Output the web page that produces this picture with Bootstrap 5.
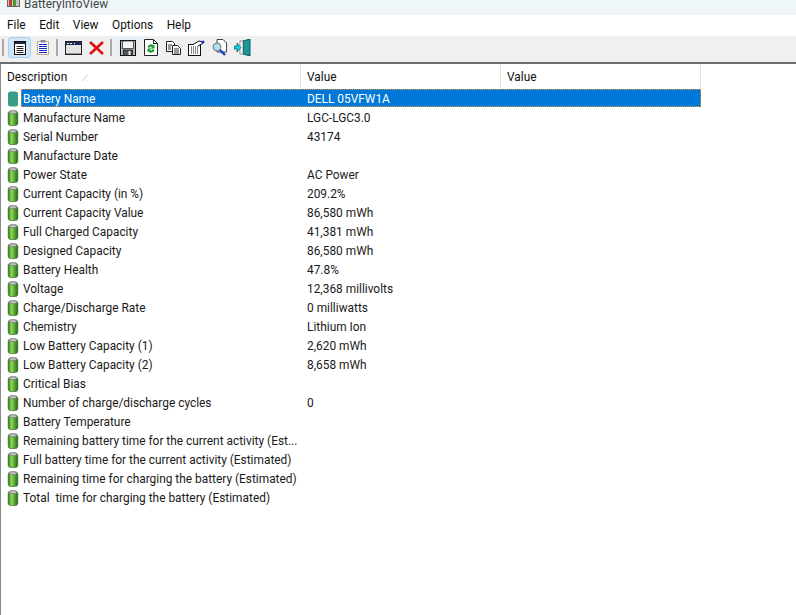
<!DOCTYPE html>
<html lang="en">
<head>
  <meta charset="UTF-8">
  <title>BatteryInfoView</title>
  <link href="https://cdn.jsdelivr.net/npm/bootstrap@5.3.3/dist/css/bootstrap.min.css" rel="stylesheet">
  <style>
    html, body { height: 100%; }
    body { background: #fff; font-family: Roboto, "Noto Sans", sans-serif; font-size: 11.9px; color: #111; overflow: hidden; }
    .app-title { height: 15px; background: #eff6f8; padding-left: 7px; gap: 4px; overflow: hidden; }
    .app-title-text { line-height: 9px; color: #444; }
    .app-menu { height: 21px; padding-left: 7px; gap: 13.5px; line-height: 20px; }
    .app-tools { height: 28px; background: #f0f0f0; padding: 1px 0 4px 0; border-bottom: 2px solid #6d6d6d; }
    .tool-sep { width: 2px; height: 17px; background: #a8a8a8; margin: 0 4px 0 2px; flex: none; }
    .tool-btn { width: 23px; height: 21px; border-radius: 3px; flex: none; }
    .tool-btn.on { background: #cfe5f8; border: 1px solid #a8d0f0; }
    .tool-btn.hover { background: #e6eff6; }
    .list-wrap { border-left: 1px solid #8a8a8a; height: 551px; }
    .head-row, .data-row { width: 700px; }
    .head-row { height: 25px; line-height: 27px; }
    .head-cell { border-right: 1px solid #e4e4e4; padding-left: 6px; }
    .col-a { width: 300px; flex: none; }
    .col-b { width: 200px; flex: none; }
    .sort-mark { color: #999; font-size: 8px; margin-left: 15px; }
    .data-row { height: 19px; line-height: 19px; color: #1a1a1a; }
    .row-icon { width: 20px; flex: none; padding: 2px 0 0 6px; }
    .row-body { width: 680px; height: 18px; padding-top: 1px; }
    .row-label { width: 279px; flex: none; padding-left: 2px; white-space: pre; overflow: hidden; }
    .row-value { padding-left: 7px; white-space: pre; }
    .data-row.sel .row-body { background: #0078d7; color: #fff; outline: 1px dotted #e8932e; outline-offset: -1px; }
  </style>
</head>
<body>

<svg width="0" height="0" class="d-block">
  <defs>
    <linearGradient id="cell" x1="0" x2="1" y1="0" y2="0">
      <stop offset="0" stop-color="#2a7a18"/>
      <stop offset=".35" stop-color="#8ed852"/>
      <stop offset="1" stop-color="#1e6a12"/>
    </linearGradient>
    <symbol id="battery" viewBox="0 0 12 16">
      <path d="M1.200 3.500c0-1 .8-2.500 2-2.500h5.600c1.200 0 2 1.500 2 2.500v9.500c0 1.500-1 2.500-2.200 2.500H3.400c-1.200 0-2.200-1-2.200-2.500z" fill="url(#cell)" stroke="#2c5a22" stroke-width=".6"/>
      <ellipse cx="6" cy="2.200" rx="3.800" ry="1.500" fill="#c4c4c4" stroke="#666" stroke-width=".6"/>
    </symbol>
    <pattern id="dither" width="2" height="2" patternUnits="userSpaceOnUse">
      <rect width="2" height="2" fill="#1f8fd0"/>
      <rect width="1" height="1" fill="#4fa83a"/>
      <rect x="1" y="1" width="1" height="1" fill="#4fa83a"/>
    </pattern>
    <symbol id="battery-sel" viewBox="0 0 12 16">
      <rect x="1" y=".5" width="10" height="15" rx="2.500" fill="url(#dither)"/>
    </symbol>
  </defs>
</svg>

<div class="app-title d-flex">
  <svg width="13" height="7" viewBox="0 0 13 7" class="flex-none"><rect x=".5" y="-2" width="12" height="8.500" fill="#c9c4c0" stroke="#666"/><rect x="2" y="-1" width="3" height="7" fill="#c83a30"/><rect x="6" y="-1" width="3" height="7" fill="#4a9a38"/></svg>
  <span class="app-title-text">BatteryInfoView</span>
</div>
<div class="app-menu d-flex"><span>File</span><span>Edit</span><span>View</span><span>Options</span><span>Help</span></div>

<div class="app-tools d-flex align-items-center">
  <span class="tool-sep"></span>
  <span class="tool-btn on d-flex align-items-center justify-content-center">
    <svg width="12" height="14" viewBox="0 0 12 14"><rect x=".5" y=".5" width="11" height="13" fill="#fff" stroke="#111"/><rect x="1" y="1" width="10" height="2" fill="#1c2440"/><path d="M2.500 5.500h7M2.500 7.500h7M2.500 9.500h7M2.500 11.500h7" stroke="#222"/></svg>
  </span>
  <span class="tool-btn d-flex align-items-center justify-content-center">
    <svg width="12" height="15" viewBox="0 0 12 15"><rect x=".5" y="1.500" width="11" height="13" fill="#fff" stroke="#8a5a28" stroke-dasharray="1 1"/><path d="M2 4.500h8M2 6.500h8M2 8.500h8M2 10.500h8M2 12.500h8" stroke="#1a2cc8"/><rect x="3.500" y="0" width="5" height="2.500" fill="#888"/></svg>
  </span>
  <span class="tool-sep"></span>
  <span class="tool-btn d-flex align-items-center justify-content-center">
    <svg width="17" height="14" viewBox="0 0 17 14"><rect x=".5" y=".5" width="16" height="13" fill="#e4e4e4" stroke="#222"/><rect x="1" y="1" width="15" height="3" fill="#1c2a5c"/><path d="M2 2.500h2M5 2.500h2M9 2.500h1" stroke="#fff"/><path d="M1 12.500h15" stroke="#999"/></svg>
  </span>
  <span class="tool-btn d-flex align-items-center justify-content-center">
    <svg width="15" height="14" viewBox="0 0 15 14"><path d="M1 1l13 12M14 1L1 13" stroke="#e01010" stroke-width="2.600"/></svg>
  </span>
  <span class="tool-sep"></span>
  <span class="tool-btn hover d-flex align-items-center justify-content-center">
    <svg width="16" height="16" viewBox="0 0 16 16"><rect x=".5" y=".5" width="15" height="15" fill="#b8b8b8" stroke="#111"/><rect x="2.500" y="1" width="11" height="7.500" fill="#f4f4f4" stroke="#222" stroke-width=".7"/><rect x="3.500" y="10" width="9" height="5.500" fill="#555" stroke="#111" stroke-width=".7"/><rect x="8.500" y="11" width="2" height="4" fill="#eee"/></svg>
  </span>
  <span class="tool-btn d-flex align-items-center justify-content-center">
    <svg width="14" height="17" viewBox="0 0 14 17"><path d="M.5.5h9l4 4v12H.5z" fill="#fff" stroke="#222"/><path d="M9.500.5v4h4" fill="none" stroke="#222"/><path d="M3.500 8a3.500 3.500 0 0 1 6-1.500l1-1v4H6.500l1.500-1.500A1.700 1.700 0 0 0 5.300 9z" fill="#18a030"/><path d="M10.500 11a3.500 3.500 0 0 1-6 1.500l-1 1v-4h4L6 11a1.700 1.700 0 0 0 2.700-1z" fill="#18a030"/></svg>
  </span>
  <span class="tool-btn d-flex align-items-center justify-content-center">
    <svg width="15" height="14" viewBox="0 0 15 14"><path d="M.5.5h6l2 2v8H.5z" fill="#fff" stroke="#222"/><path d="M6.500 4.500h5l3 3v6h-8z" fill="#fff" stroke="#222"/><path d="M2 4h4M2 6h3M2 8h3M8 8h5M8 10h5M8 12h5" stroke="#333"/></svg>
  </span>
  <span class="tool-btn d-flex align-items-center justify-content-center">
    <svg width="17" height="16" viewBox="0 0 17 16"><rect x=".5" y="4.500" width="12" height="11" fill="#fff" stroke="#111"/><path d="M3 7h7M3 9h7M3 11h7M3 13h7" stroke="#111" stroke-dasharray="1 1"/><path d="M5 4.500l6-3.500 4 1-1 2-4 2" fill="#fff" stroke="#111"/><circle cx="15" cy="2" r="1.500" fill="#1a2cc8"/></svg>
  </span>
  <span class="tool-btn d-flex align-items-center justify-content-center">
    <svg width="17" height="17" viewBox="0 0 17 17"><path d="M6 .5h6l3.500 3.500V13H6z" fill="#fff" stroke="#444"/><circle cx="6" cy="8" r="4" fill="#a8e0f0" stroke="#777"/><path d="M9 11l5 5" stroke="#1a3cc8" stroke-width="2.400"/></svg>
  </span>
  <span class="tool-btn d-flex align-items-center justify-content-center">
    <svg width="17" height="17" viewBox="0 0 17 17"><path d="M9 2l7-2v17l-7-2z" fill="#18989a" stroke="#0a5a60"/><rect x="6" y="2" width="3" height="13" fill="#fff" stroke="#555" stroke-width=".6"/><path d="M0 7h3V4l4 4.500L3 13v-3H0z" fill="#10d0e8" stroke="#0a3a40" stroke-width=".6"/></svg>
  </span>
</div>

<div class="list-wrap">
  <div class="head-row d-flex">
    <div class="head-cell col-a">Description<span class="sort-mark">⟋</span></div>
    <div class="head-cell col-b">Value</div>
    <div class="head-cell col-b">Value</div>
  </div>
  <div id="rows"></div>
</div>

<script>
  // label, value
  const items = [
    ["Battery Name", "DELL 05VFW1A"],
    ["Manufacture Name", "LGC-LGC3.0"],
    ["Serial Number", "43174"],
    ["Manufacture Date", ""],
    ["Power State", "AC Power"],
    ["Current Capacity (in %)", "209.2%"],
    ["Current Capacity Value", "86,580 mWh"],
    ["Full Charged Capacity", "41,381 mWh"],
    ["Designed Capacity", "86,580 mWh"],
    ["Battery Health", "47.8%"],
    ["Voltage", "12,368 millivolts"],
    ["Charge/Discharge Rate", "0 milliwatts"],
    ["Chemistry", "Lithium Ion"],
    ["Low Battery Capacity (1)", "2,620 mWh"],
    ["Low Battery Capacity (2)", "8,658 mWh"],
    ["Critical Bias", ""],
    ["Number of charge/discharge cycles", "0"],
    ["Battery Temperature", ""],
    ["Remaining battery time for the current activity (Est...", ""],
    ["Full battery time for the current activity (Estimated)", ""],
    ["Remaining time for charging the battery (Estimated)", ""],
    ["Total  time for charging the battery (Estimated)", ""]
  ];
  let output = "";
  items.forEach((item, i) => {
    output += `
      <div class="data-row d-flex ${i === 0 ? "sel" : ""}">
        <div class="row-icon"><svg width="12" height="16" class="d-block"><use href="#${i === 0 ? "battery-sel" : "battery"}"/></svg></div>
        <div class="row-body d-flex">
          <div class="row-label">${item[0]}</div>
          <div class="row-value">${item[1]}</div>
        </div>
      </div>`;
  });
  document.getElementById("rows").innerHTML = output;
</script>

<script src="https://cdn.jsdelivr.net/npm/bootstrap@5.3.3/dist/js/bootstrap.bundle.min.js"></script>
</body>
</html>
